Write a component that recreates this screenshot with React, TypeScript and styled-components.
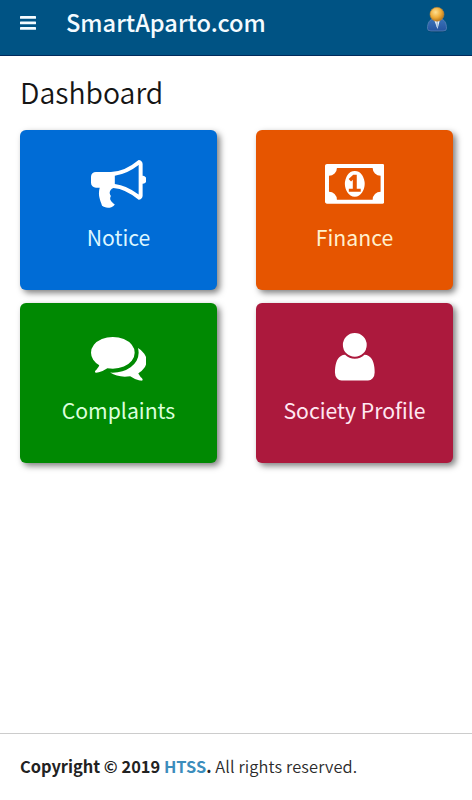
import React from 'react';
import styled, { createGlobalStyle } from 'styled-components';

const GlobalStyle = createGlobalStyle`
  * { box-sizing: border-box; }
  body {
    margin: 0;
    background: #fff;
    font-family: 'Source Sans Pro', 'Noto Sans CJK SC', sans-serif;
  }
`;

const Page = styled.div`
  display: flex;
  flex-direction: column;
  height: 100vh;
  overflow: hidden;
`;

const Header = styled.header`
  display: flex;
  align-items: flex-start;
  flex: none;
  height: 56px;
  padding: 0 24px 0 20px;
  background: #005384;
  border-bottom: 1px solid #002a5c;
`;

const MenuButton = styled.button`
  display: flex;
  margin: 16px 30px 0 0;
  padding: 0;
  border: 0;
  background: none;
`;

const Brand = styled.div`
  flex: 1;
  color: #f4fbff;
  font-size: 23.6px;
  font-weight: 500;
  line-height: 44px;
  white-space: nowrap;
`;

const Avatar = styled.svg`
  flex: none;
  margin-top: 6px;
`;

const Main = styled.main`
  flex: 1;
  padding: 0 19px 0 20px;
`;

const Title = styled.h1`
  margin: 16px 0 18px;
  color: #151515;
  font-size: 28.4px;
  font-weight: 350;
  line-height: 40px;
`;

const Grid = styled.div`
  display: grid;
  grid-template-columns: 197px 197px;
  justify-content: space-between;
  row-gap: 13px;
`;

const Card = styled.a<{ $color: string }>`
  display: flex;
  flex-direction: column;
  align-items: center;
  height: 160px;
  padding-top: 26px;
  border-radius: 6px;
  background: ${(p) => p.$color};
  box-shadow: 3px 3px 6px rgba(0, 0, 0, 0.5);
`;

const CardIcon = styled.svg`
  display: block;
  height: 55.6px;
  fill: #fff;
`;

const CardLabel = styled.span<{ $tint: string }>`
  margin-top: 9px;
  color: ${(p) => p.$tint};
  font-size: 21.2px;
  font-weight: 400;
  line-height: 32px;
  white-space: nowrap;
`;

const Footer = styled.footer`
  flex: none;
  height: 67px;
  padding: 16px 20px;
  border-top: 1px solid #ccc;
  color: #2b2b2b;
  font-size: 16.4px;
  font-weight: 350;
  line-height: 32px;
  letter-spacing: 0.12px;
  white-space: nowrap;
`;

const Strong = styled.strong`
  color: #222;
  font-weight: 700;
  letter-spacing: 0;
`;

const Link = styled.a`
  color: #3c8dbc;
`;

const cards = [
  {
    label: 'Notice',
    color: '#006cd6',
    tint: '#dcf6ff',
    width: 1792,
    path: 'M1664 640q53 0 90.5 37.5t37.5 90.5-37.5 90.5-90.5 37.5v384q0 52-38 90t-90 38q-417-347-812-380-58 19-91 66t-31 100.5 40 92.5q-20 33-23 65.5t6 58 33.5 55 48 50 61.5 50.5q-29 58-111.5 83t-168.5 11.5-132-55.5q-7-23-29.5-87.5t-32-94.5-23-89-15-101 3.5-98 22-110.5h-122q-66 0-113-47t-47-113v-192q0-66 47-113t113-47h480q435 0 896-384 52 0 90 38t38 90v384zm-128 604v-954q-394 302-768 343v270q377 42 768 341z',
  },
  {
    label: 'Finance',
    color: '#e65500',
    tint: '#fff0cd',
    width: 1920,
    path: 'M768 1152h384v-96h-128v-448h-114l-148 137 77 80q42-37 55-57h2v288h-128v96zm512-256q0 70-21 142t-59.5 134-101.5 101-138 39-138-39-101.5-101-59.5-134-21-142 21-142 59.5-134 101.5-101 138-39 138 39 101.5 101 59.5 134 21 142zm512 256v-512q-106 0-181-75t-75-181h-1152q0 106-75 181t-181 75v512q106 0 181 75t75 181h1152q0-106 75-181t181-75zm128-832v1152q0 26-19 45t-45 19h-1792q-26 0-45-19t-19-45v-1152q0-26 19-45t45-19h1792q26 0 45 19t19 45z',
  },
  {
    label: 'Complaints',
    color: '#008902',
    tint: '#dcffdc',
    width: 1792,
    path: 'M1408 768q0 139-94 257t-256.5 186.5-353.5 68.5q-86 0-176-16-124 88-278 128-36 9-86 16h-3q-11 0-20.5-8t-11.5-21q-1-3-1-6.5t.5-6.5 2-6l2.5-5 3.5-5.5 4-5 4.5-5 4-4.5q5-6 23-25t26-29.5 22.5-29 25-38.5 20.5-44q-124-72-195-177t-71-224q0-139 94-257t256.5-186.5 353.5-68.5 353.5 68.5 256.5 186.5 94 257zm384 256q0 120-71 224.5t-195 176.5q10 24 20.5 44t25 38.5 22.5 29 26 29.5 23 25q1 1 4 4.5t4.5 5 4 5 3.5 5.5l2.5 5 2 6 .5 6.5-1 6.5q-3 14-13 22t-22 7q-50-7-86-16-154-40-278-128-90 16-176 16-271 0-472-132 58 4 88 4 161 0 309-45t264-129q125-92 192-212t67-254q0-77-23-152 129 71 204 178t75 230z',
  },
  {
    label: 'Society Profile',
    color: '#ac193d',
    tint: '#ffe8f2',
    width: 1792,
    path: 'M1536 1399q0 109-62.5 187t-150.5 78h-854q-88 0-150.5-78t-62.5-187q0-85 8.5-160.5t31.5-152 58.5-131 94-89 134.5-34.5q131 128 313 128t313-128q76 0 134.5 34.5t94 89 58.5 131 31.5 152 8.5 160.5zm-256-887q0 159-112.5 271.5t-271.5 112.5-271.5-112.5-112.5-271.5 112.5-271.5 271.5-112.5 271.5 112.5 112.5 271.5z',
  },
];

export default function App() {
  return (
    <>
      <GlobalStyle />
      <Page>
        <Header>
          <MenuButton aria-label="Menu">
            <svg width="16" height="14" viewBox="0 0 16 14" fill="#f4fbff">
              <rect width="16" height="2.8" rx="0.6" />
              <rect y="5.5" width="16" height="2.8" rx="0.6" />
              <rect y="11" width="16" height="2.8" rx="0.6" />
            </svg>
          </MenuButton>
          <Brand>SmartAparto.com</Brand>
          <Avatar width="22" height="27" viewBox="0 0 22 27">
            <defs>
              <radialGradient id="head" cx="0.4" cy="0.35" r="0.65">
                <stop offset="0" stopColor="#ffdf90" />
                <stop offset="0.6" stopColor="#efab37" />
                <stop offset="1" stopColor="#b77820" />
              </radialGradient>
              <linearGradient id="coat" x1="0" y1="0" x2="0" y2="1">
                <stop offset="0" stopColor="#3a72b8" />
                <stop offset="1" stopColor="#2454a1" />
              </linearGradient>
            </defs>
            <ellipse cx="11" cy="25" rx="9" ry="1.5" fill="#00365f" opacity="0.6" />
            <path d="M1.5 22.5C1.5 17 3.5 13 8 13h6c4.500 0 6.500 4 6.500 9.500Q20.500 25 17 25H5q-3.500 0-3.500-2.500z" fill="url(#coat)" stroke="#5f86b8" strokeWidth="0.7" />
            <path d="M8 13.500h6L11.500 23z" fill="#eef4fb" />
            <path d="M10.600 15h1.200l.4 5-.9 2-.9-2z" fill="#a3c0dd" />
            <circle cx="11" cy="8.300" r="7" fill="url(#head)" stroke="#ae823e" strokeWidth="0.6" />
          </Avatar>
        </Header>
        <Main>
          <Title>Dashboard</Title>
          <Grid>
            {cards.map((card) => (
              <Card key={card.label} $color={card.color}>
                <CardIcon viewBox={`0 0 ${card.width} 1792`}>
                  <path d={card.path} />
                </CardIcon>
                <CardLabel $tint={card.tint}>{card.label}</CardLabel>
              </Card>
            ))}
          </Grid>
        </Main>
        <Footer>
          <Strong>
            Copyright © 2019 <Link>HTSS</Link>.
          </Strong>{' '}
          All rights reserved.
        </Footer>
      </Page>
    </>
  );
}
